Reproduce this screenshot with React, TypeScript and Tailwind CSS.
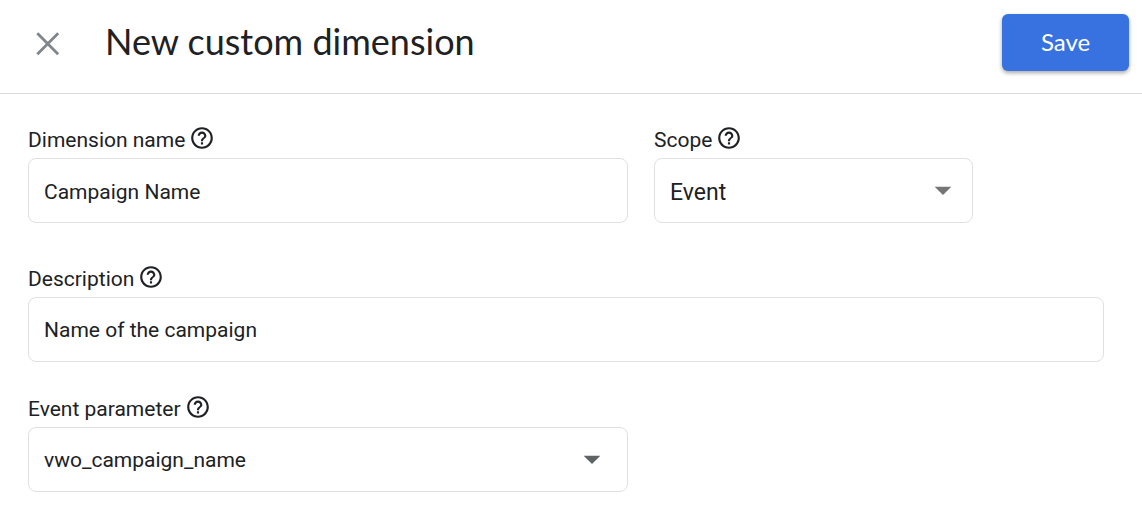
import { useState } from 'react';
import type { ReactNode } from 'react';
import { MdHelpOutline, MdArrowDropDown } from 'react-icons/md';

interface FieldProps { id: string; label: string; className?: string; children: ReactNode; }

function Field({ id, label, className = '', children }: FieldProps) {
  return (
    <div className={className}>
      <div className="flex h-8 items-center gap-1 pb-1">
        <label htmlFor={id} className="text-[21px] leading-6">{label}</label>
        <button type="button" aria-label={`Help: ${label}`} className="mb-1 text-[#202124]">
          <MdHelpOutline className="size-[26px]" />
        </button>
      </div>
      {children}
    </div>
  );
}

const boxClass = 'block h-[65px] w-full appearance-none rounded-lg border border-[#dfe0e2] bg-white px-[15px] outline-none focus:border-[#3871e0]';

interface SelectProps { id: string; value: string; options: string[]; textClass: string; arrowClass: string; onChange: (v: string) => void; }

function SelectBox({ id, value, options, textClass, arrowClass, onChange }: SelectProps) {
  return (
    <div className="relative">
      <select id={id} value={value} onChange={e => onChange(e.target.value)} className={`${boxClass} ${textClass}`}>
        {options.map(o => <option key={o}>{o}</option>)}
      </select>
      <MdArrowDropDown className={`pointer-events-none absolute top-3 size-10 ${arrowClass}`} />
    </div>
  );
}

export default function App() {
  const [name, setName] = useState('Campaign Name');
  const [scope, setScope] = useState('Event');
  const [description, setDescription] = useState('Name of the campaign');
  const [param, setParam] = useState('vwo_campaign_name');

  return (
    <div className="min-h-screen bg-white font-[Roboto,sans-serif] text-[#202124]">
      <header className="flex h-[94px] items-start border-b border-[#dadce0] pr-[13px] pl-7">
        <button type="button" aria-label="Close" className="mt-6 text-[#80868b]">
          <svg viewBox="0 0 40 40" className="size-10" fill="none" stroke="currentColor" strokeWidth="2.8">
            <path d="M9.3 9.3 30.2 30.2M30.2 9.3 9.3 30.2" />
          </svg>
        </button>
        <h1 className="mt-[19px] ml-[37px] font-[Lato,sans-serif] text-[36px] leading-11">New custom dimension</h1>
        <button type="submit" form="dimension" className="mt-3.5 ml-auto h-[57px] w-[127px] rounded-md bg-[#3871e0] pb-0.5 font-[Lato,sans-serif] text-[24px] text-white shadow-[0_2px_4px_rgba(0,0,0,0.35)]">Save</button>
      </header>

      <form id="dimension" onSubmit={e => e.preventDefault()} className="pt-8 pr-[38px] pl-7">
        <div className="flex gap-[26px]">
          <Field id="name" label="Dimension name" className="w-[600px]">
            <input id="name" value={name} onChange={e => setName(e.target.value)} className={`${boxClass} pt-0.5 text-[21px]`} />
          </Field>
          <Field id="scope" label="Scope" className="w-[319px]">
            <SelectBox id="scope" value={scope} options={['Event', 'User']} textClass="pt-1.5 text-[23px]" arrowClass="right-2.5 text-[#757575]" onChange={setScope} />
          </Field>
        </div>
        <Field id="description" label="Description" className="mt-[42px]">
          <input id="description" value={description} onChange={e => setDescription(e.target.value)} className={`${boxClass} text-[21px]`} />
        </Field>
        <Field id="param" label="Event parameter" className="mt-[33px] w-[600px]">
          <SelectBox id="param" value={param} options={['vwo_campaign_name']} textClass="pt-0.5 text-[21px]" arrowClass="right-4 text-[#5f6368]" onChange={setParam} />
        </Field>
      </form>
    </div>
  );
}
